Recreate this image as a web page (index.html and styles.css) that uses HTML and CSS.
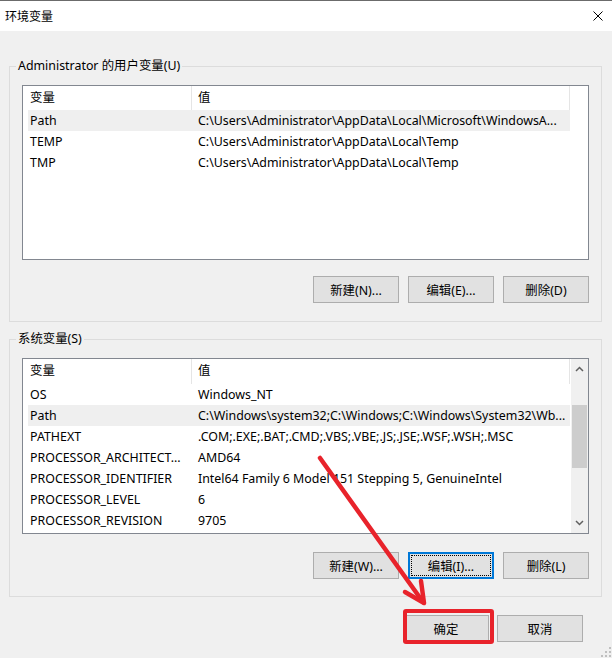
FILE: index.html
```html
<!DOCTYPE html>
<html lang="zh-CN">
<head>
<meta charset="utf-8">
<title>环境变量</title>
<link rel="stylesheet" href="styles.css">
</head>
<body>
<div class="window">
  <div class="titlebar">
    <span class="title">环境变量</span>
    <svg class="close" width="10" height="10" viewBox="0 0 10 10"><path d="M0.5 0.5 L9.5 9.5 M9.5 0.5 L0.5 9.5" stroke="#000" stroke-width="1" fill="none"/></svg>
  </div>
  <div class="main">
    <section class="group">
      <div class="legend">Administrator 的用户变量(U)</div>
      <div class="list list-user">
        <div class="table">
          <div class="head"><div class="hc hc1">变量</div><div class="hc hc2">值</div></div>
          <div class="row sel"><span>Path</span><span>C:\Users\Administrator\AppData\Local\Microsoft\WindowsA...</span></div>
          <div class="row"><span>TEMP</span><span>C:\Users\Administrator\AppData\Local\Temp</span></div>
          <div class="row"><span>TMP</span><span>C:\Users\Administrator\AppData\Local\Temp</span></div>
        </div>
      </div>
      <div class="btns">
        <button class="btn">新建(N)...</button>
        <button class="btn">编辑(E)...</button>
        <button class="btn">删除(D)</button>
      </div>
    </section>
    <section class="group group-sys">
      <div class="legend">系统变量(S)</div>
      <div class="list list-sys">
        <div class="table">
          <div class="head head-sys"><div class="hc hc1">变量</div><div class="hc hc2">值</div></div>
          <div class="row"><span>OS</span><span>Windows_NT</span></div>
          <div class="row sel"><span>Path</span><span>C:\Windows\system32;C:\Windows;C:\Windows\System32\Wb...</span></div>
          <div class="row"><span>PATHEXT</span><span>.COM;.EXE;.BAT;.CMD;.VBS;.VBE;.JS;.JSE;.WSF;.WSH;.MSC</span></div>
          <div class="row"><span>PROCESSOR_ARCHITECT...</span><span>AMD64</span></div>
          <div class="row"><span>PROCESSOR_IDENTIFIER</span><span>Intel64 Family 6 Model 151 Stepping 5, GenuineIntel</span></div>
          <div class="row"><span>PROCESSOR_LEVEL</span><span>6</span></div>
          <div class="row"><span>PROCESSOR_REVISION</span><span>9705</span></div>
        </div>
        <div class="sb">
          <div class="sb-arrow sb-up"><svg width="9" height="6" viewBox="0 0 9 6"><path d="M1 5 L4.5 1.5 L8 5" stroke="#606060" stroke-width="1.5" fill="none"/></svg></div>
          <div class="sb-gap"></div>
          <div class="sb-thumb"></div>
          <div class="sb-fill"></div>
          <div class="sb-arrow sb-down"><svg width="9" height="6" viewBox="0 0 9 6"><path d="M1 1 L4.5 4.5 L8 1" stroke="#606060" stroke-width="1.5" fill="none"/></svg></div>
        </div>
      </div>
      <div class="btns btns-sys">
        <button class="btn">新建(W)...</button>
        <button class="btn focus">编辑(I)...</button>
        <button class="btn">删除(L)</button>
      </div>
    </section>
    <div class="footer">
      <button class="btn">确定</button>
      <button class="btn">取消</button>
    </div>
  </div>
</div>
<div class="redbox"></div>
<svg class="arrow" width="612" height="658" viewBox="0 0 612 658">
  <line x1="320" y1="458" x2="423" y2="602" stroke="#e8232b" stroke-width="4.5" stroke-linecap="round"/>
  <polyline points="405,592 424,603 421,581" stroke="#e8232b" stroke-width="4.5" stroke-linecap="round" stroke-linejoin="round" fill="none"/>
</svg>
<svg class="grip" width="12" height="12" viewBox="0 0 12 12">
  <rect x="9" y="1" width="2" height="2" fill="#bfbfbf"/>
  <rect x="5" y="5" width="2" height="2" fill="#bfbfbf"/>
  <rect x="9" y="5" width="2" height="2" fill="#bfbfbf"/>
  <rect x="1" y="9" width="2" height="2" fill="#bfbfbf"/>
  <rect x="5" y="9" width="2" height="2" fill="#bfbfbf"/>
  <rect x="9" y="9" width="2" height="2" fill="#bfbfbf"/>
</svg>
</body>
</html>
```

FILE: styles.css
```css
* { box-sizing: border-box; }
html, body { margin: 0; padding: 0; }
body {
  width: 612px;
  height: 658px;
  overflow: hidden;
  position: relative;
  background: #f0f0f0;
  font-family: "Noto Sans", "Noto Sans CJK SC", sans-serif;
  font-size: 12.4px;
  color: #000;
}
.window {
  border-top: 1px solid #6b6b6b;
}
.titlebar {
  height: 30px;
  background: #fff;
  display: flex;
  align-items: center;
  justify-content: space-between;
  padding: 0 9px 0 5px;
}
.title { font-size: 12px; }
.close { display: block; }
.main {
  padding: 35px 10px 0 9px;
}
.group {
  border: 1px solid #dcdcdc;
  padding: 0 12px 18px 12px;
}
.group-sys {
  margin-top: 17px;
  padding-bottom: 17px;
}
.legend {
  width: fit-content;
  height: 16px;
  line-height: 16px;
  margin: -9px 0 0 -6px;
  padding: 0 2px;
  background: #f0f0f0;
  white-space: nowrap;
}
.list {
  margin-top: 11px;
  height: 175px;
  border: 1px solid #828790;
  background: #fff;
  display: flex;
  overflow: hidden;
}
.list-sys { height: 176px; }
.table {
  width: 547px;
  flex: none;
}
.head {
  height: 24px;
  display: flex;
  border-right: 1px solid #e5e5e5;
}
.head-sys { height: 25px; }
.hc {
  line-height: 24px;
  white-space: nowrap;
}
.hc1 {
  width: 169px;
  padding-left: 7px;
  border-right: 1px solid #e5e5e5;
}
.hc2 { padding-left: 6px; }
.row {
  margin-left: 5px;
  height: 21px;
  line-height: 21px;
  display: grid;
  grid-template-columns: 168px 1fr;
  white-space: nowrap;
  overflow: hidden;
}
.row span {
  padding-left: 2px;
  overflow: hidden;
}
.row.sel { background: #efefef; }
.sb {
  margin-left: auto;
  width: 17px;
  background: #f0f0f0;
  display: flex;
  flex-direction: column;
  align-items: stretch;
}
.sb-arrow {
  height: 20px;
  display: flex;
  align-items: center;
  justify-content: center;
}
.sb-gap { height: 26px; }
.sb-thumb {
  height: 63px;
  background: #cdcdcd;
  margin: 0 1px;
}
.sb-fill { flex: 1; }
.btns {
  margin-top: 16px;
  display: flex;
  justify-content: flex-end;
  gap: 9px;
}
.btns-sys { margin-top: 18px; }
.btn {
  width: 86px;
  height: 27px;
  margin: 0;
  padding: 0;
  background: #e1e1e1;
  border: 1px solid #adadad;
  border-radius: 0;
  font-family: "Noto Sans", "Noto Sans CJK SC", sans-serif;
  font-size: 12.4px;
  color: #000;
}
.btn.focus {
  border: 2px solid #0078d7;
  outline: 1px dotted #000;
  outline-offset: -4px;
}
.footer {
  margin-top: 18px;
  display: flex;
  justify-content: flex-end;
  gap: 8px;
  padding-right: 19px;
}
.redbox {
  position: absolute;
  left: 403px;
  top: 609px;
  width: 91px;
  height: 35px;
  border: 4px solid #e8232b;
  border-radius: 3px;
}
.arrow {
  position: absolute;
  left: 0;
  top: 0;
  pointer-events: none;
}
.grip {
  position: absolute;
  right: 0;
  bottom: 0;
}
```
